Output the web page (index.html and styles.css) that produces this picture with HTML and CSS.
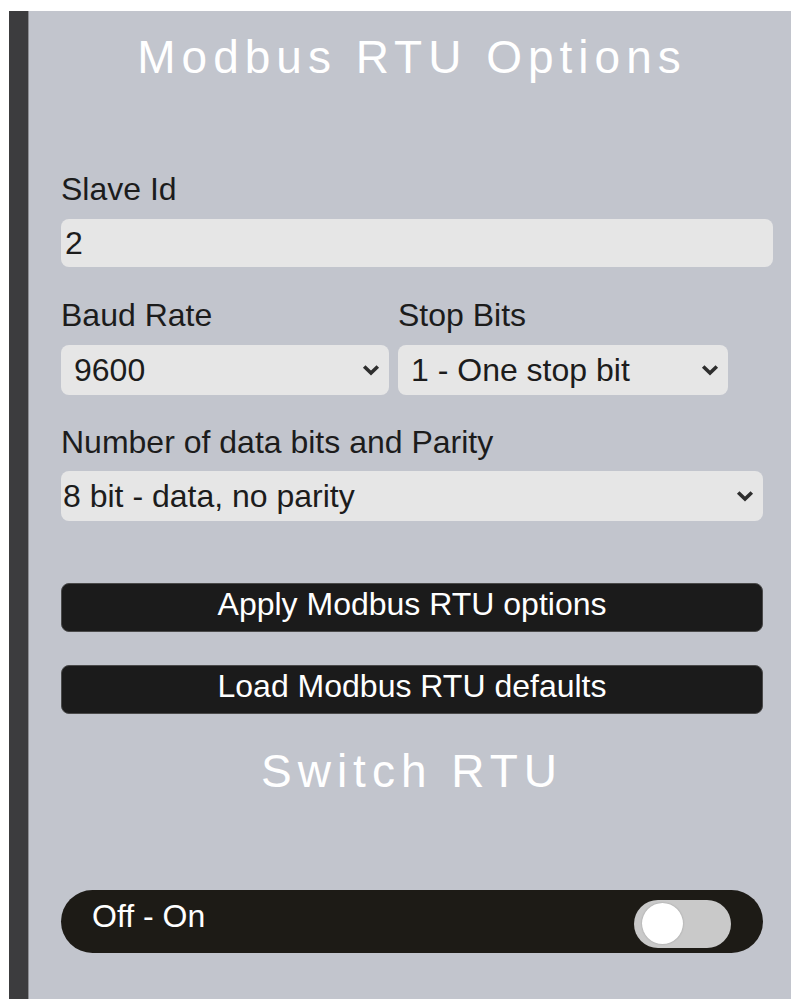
FILE: index.html
```html
<!DOCTYPE html>
<html lang="en">
<head>
<meta charset="utf-8">
<title>Modbus RTU Options</title>
<link rel="stylesheet" href="styles.css">
</head>
<body>
<main class="panel">
  <h2 class="heading heading-top">Modbus RTU Options</h2>

  <form class="rtu-form">
    <div class="field field-slave">
      <label class="field-label" for="slave-id">Slave Id</label>
      <input class="text-input" id="slave-id" type="text" value="2">
    </div>

    <div class="field-row">
      <div class="field">
        <label class="field-label" for="baud">Baud Rate</label>
        <div class="select-wrap">
          <select class="select select-small" id="baud">
            <option>9600</option>
            <option>19200</option>
            <option>38400</option>
            <option>57600</option>
            <option>115200</option>
          </select>
          <svg class="chevron" viewBox="0 0 18 12" width="18" height="12" aria-hidden="true"><path d="M2.2 2.5 L9 9 L15.8 2.5"/></svg>
        </div>
      </div>
      <div class="field">
        <label class="field-label" for="stop">Stop Bits</label>
        <div class="select-wrap">
          <select class="select select-small" id="stop">
            <option>1 - One stop bit</option>
            <option>2 - Two stop bits</option>
          </select>
          <svg class="chevron" viewBox="0 0 18 12" width="18" height="12" aria-hidden="true"><path d="M2.2 2.5 L9 9 L15.8 2.5"/></svg>
        </div>
      </div>
    </div>

    <div class="field field-parity">
      <label class="field-label" for="parity">Number of data bits and Parity</label>
      <div class="select-wrap">
        <select class="select select-wide" id="parity">
          <option>8 bit - data, no parity</option>
          <option>8 bit - data, even parity</option>
          <option>8 bit - data, odd parity</option>
        </select>
        <svg class="chevron" viewBox="0 0 18 12" width="18" height="12" aria-hidden="true"><path d="M2.2 2.5 L9 9 L15.8 2.5"/></svg>
      </div>
    </div>

    <button class="action-btn action-apply" type="button">Apply Modbus RTU options</button>
    <button class="action-btn" type="button">Load Modbus RTU defaults</button>
  </form>

  <h2 class="heading heading-switch">Switch RTU</h2>

  <div class="toggle-bar">
    <span class="toggle-text">Off - On</span>
    <label class="switch">
      <input class="switch-input" type="checkbox">
      <span class="switch-knob"></span>
    </label>
  </div>
</main>
</body>
</html>
```

FILE: styles.css
```css
html, body {
  height: 100%;
}

body {
  margin: 0;
  padding: 11px 0 0 9px;
  box-sizing: border-box;
  background: #ffffff;
  font-family: "Liberation Sans", Arial, sans-serif;
  color: #1c1c1c;
}

.panel {
  box-sizing: border-box;
  min-height: calc(100vh - 11px);
  padding: 23px 28px 0 33px;
  background: #c2c5cd;
  border-left: 19px solid #3c3c3e;
  box-shadow: inset 1px 0 0 #8d8e93;
}

.heading {
  margin: 0;
  font-size: 46px;
  line-height: 46px;
  font-weight: normal;
  letter-spacing: 6px;
  color: #ffffff;
  text-align: center;
}

.heading-top {
  margin-bottom: 93px;
}

.heading-switch {
  margin-top: 34px;
  margin-bottom: 96px;
}

.rtu-form {
  display: flex;
  flex-direction: column;
}

.field {
  display: flex;
  flex-direction: column;
}

.field-label {
  display: block;
  font-size: 32px;
  line-height: 32px;
  margin-bottom: 14px;
  color: #1c1c1c;
}

.field-slave {
  margin-bottom: 32px;
}

.text-input {
  box-sizing: content-box;
  width: 100%;
  height: 48px;
  padding: 0 6px 0 4px;
  border: none;
  border-radius: 8px;
  background: #e6e6e6;
  font-family: inherit;
  font-size: 32px;
  color: #1c1c1c;
  outline: none;
}

.field-row {
  display: grid;
  grid-template-columns: 328px 330px;
  column-gap: 9px;
  margin-bottom: 31px;
}

.field-parity .field-label {
  margin-bottom: 13px;
}

.select-wrap {
  position: relative;
}

.select {
  -webkit-appearance: none;
  appearance: none;
  display: block;
  box-sizing: border-box;
  width: 100%;
  height: 50px;
  border: none;
  border-radius: 8px;
  background: #e6e6e6;
  font-family: inherit;
  font-size: 32px;
  color: #1c1c1c;
  outline: none;
}

.select-small {
  padding: 0 34px 0 13px;
}

.select-wide {
  padding: 0 34px 0 2px;
}

.chevron {
  position: absolute;
  right: 9px;
  top: 50%;
  margin-top: -6px;
  pointer-events: none;
  fill: none;
  stroke: #2e2e2e;
  stroke-width: 3.6;
  stroke-linejoin: miter;
}

.action-btn {
  box-sizing: border-box;
  width: 100%;
  height: 49px;
  padding: 0 0 6px;
  border: 1px solid #4a4a4a;
  border-radius: 8px;
  background: #1b1b1b;
  color: #ffffff;
  font-family: inherit;
  font-size: 32px;
  cursor: pointer;
}

.action-apply {
  margin-top: 62px;
  margin-bottom: 33px;
}

.toggle-bar {
  box-sizing: border-box;
  display: flex;
  justify-content: space-between;
  align-items: flex-start;
  height: 63px;
  padding: 10px 32px 5px 31px;
  border-radius: 32px;
  background: #1d1b16;
}

.toggle-text {
  font-size: 32px;
  line-height: 32px;
  color: #ffffff;
}

.switch {
  position: relative;
  display: block;
  width: 97px;
  height: 48px;
  border-radius: 24px;
  background: #c9c9c9;
  cursor: pointer;
}

.switch-input {
  position: absolute;
  opacity: 0;
  width: 0;
  height: 0;
  margin: 0;
}

.switch-knob {
  position: absolute;
  left: 8px;
  top: 3px;
  width: 41px;
  height: 41px;
  border-radius: 50%;
  background: #ffffff;
  box-shadow: 0 0 2px rgba(0, 0, 0, 0.25);
}
```
